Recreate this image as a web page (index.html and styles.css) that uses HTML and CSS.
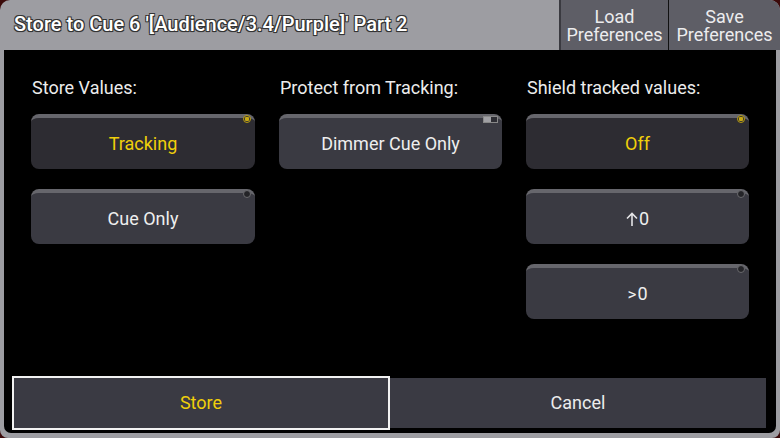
FILE: index.html
```html
<!DOCTYPE html>
<html lang="en">
<head>
    <meta charset="UTF-8">
    <title>Store to Cue 6</title>
    <link rel="stylesheet" href="styles.css">
</head>
<body>

<div class="window">
    <div class="titlebar">
        <div class="title">Store to Cue 6 '[Audience/3.4/Purple]' Part 2</div>
        <div class="header-btn"><div>Load</div><div>Preferences</div></div>
        <div class="header-btn last"><div>Save</div><div>Preferences</div></div>
    </div>

    <div class="content">
        <div class="columns">
            <div class="column">
                <div class="label">Store Values:</div>
                <div class="opt selected"><span class="radio on"></span>Tracking</div>
                <div class="opt"><span class="radio"></span>Cue Only</div>
            </div>
            <div class="column">
                <div class="label">Protect from Tracking:</div>
                <div class="opt"><span class="toggle"></span>Dimmer Cue Only</div>
            </div>
            <div class="column">
                <div class="label">Shield tracked values:</div>
                <div class="opt selected"><span class="radio on"></span>Off</div>
                <div class="opt"><span class="radio"></span><svg class="arrow" width="12" height="14" viewBox="0 0 12 14"><path d="M6 14V1.5M1 6.5L6 1.5L11 6.5" fill="none" stroke="#e4e4e6" stroke-width="1.6"/></svg>0</div>
                <div class="opt"><span class="radio"></span><span class="chev">&gt;</span>0</div>
            </div>
        </div>

        <div class="footer">
            <div class="action store">Store</div>
            <div class="action cancel">Cancel</div>
        </div>
    </div>
</div>

</body>
</html>
```

FILE: styles.css
```css
body {
    margin: 0;
    background: #3b0a0a;
    font-family: Roboto, 'Noto Sans', sans-serif;
    color: #e6e6e8;
}
.window {
    width: 780px;
    height: 438px;
    background: #9d9da2;
    border-radius: 10px 10px 8px 8px;
    display: flex;
    flex-direction: column;
    overflow: hidden;
}
.titlebar {
    height: 50px;
    display: flex;
}
.title {
    flex: 1;
    padding-left: 14px;
    line-height: 48px;
    font-size: 20px;
    font-weight: 500;
    color: #fff;
    text-shadow: -1px -1px 0 #333, 1px -1px 0 #333, -1px 1px 0 #333, 1px 1px 0 #333, 0 1px 1px #333;
}
.header-btn {
    width: 109px;
    background: #5e5e66;
    border-left: 2px solid #3a3a40;
    font-size: 18px;
    line-height: 18px;
    text-align: center;
    padding-top: 8px;
    box-sizing: border-box;
    color: #ececee;
}
.header-btn.last {
    width: 112px;
    border-left: 1px solid #111;
    border-top-right-radius: 9px;
}
.content {
    flex: 1;
    margin: 0 4px 5px 4px;
    background: #000;
    border-radius: 0 0 7px 7px;
    display: flex;
    flex-direction: column;
}
.columns {
    display: grid;
    grid-template-columns: 224px 223px 223px;
    column-gap: 24px;
    padding: 28px 0 0 27px;
}
.label {
    font-size: 18px;
    height: 20px;
    line-height: 20px;
    margin-bottom: 16px;
    padding-left: 1px;
    color: #ececec;
}
.opt {
    position: relative;
    height: 51px;
    margin-bottom: 20px;
    background: #3a3a42;
    border-top: 4px solid #66666c;
    border-radius: 8px;
    font-size: 18px;
    line-height: 51px;
    text-align: center;
    color: #eeeeee;
}
.opt.selected {
    background: #2d2c32;
    color: #f0cf0a;
}
.radio {
    position: absolute;
    top: -3px;
    right: 4px;
    width: 6px;
    height: 6px;
    border: 1px solid #6a6a6e;
    border-radius: 50%;
    background: #242428;
}
.radio.on {
    border-color: #b89c10;
    background: radial-gradient(circle, #c6a812 0 2px, #2d2c32 2.5px);
}
.toggle {
    position: absolute;
    top: -2px;
    right: 4px;
    width: 13px;
    height: 5px;
    border: 1px solid #888;
    background: linear-gradient(to right, #a0a0a4 0 7px, #2d2d33 7px);
}
.arrow {
    vertical-align: -1px;
    margin-right: 1px;
}
.chev {
    font-size: 17px;
    margin-right: 1px;
}
.footer {
    margin-top: auto;
    display: flex;
    align-items: center;
    padding: 0 10px 3px 8px;
}
.action {
    height: 50px;
    line-height: 50px;
    background: #3a3a43;
    text-align: center;
    font-size: 18px;
}
.store {
    width: 374px;
    border: 2px solid #f2f2f2;
    color: #f0cf0a;
}
.cancel {
    flex: 1;
    color: #ececec;
}
```
